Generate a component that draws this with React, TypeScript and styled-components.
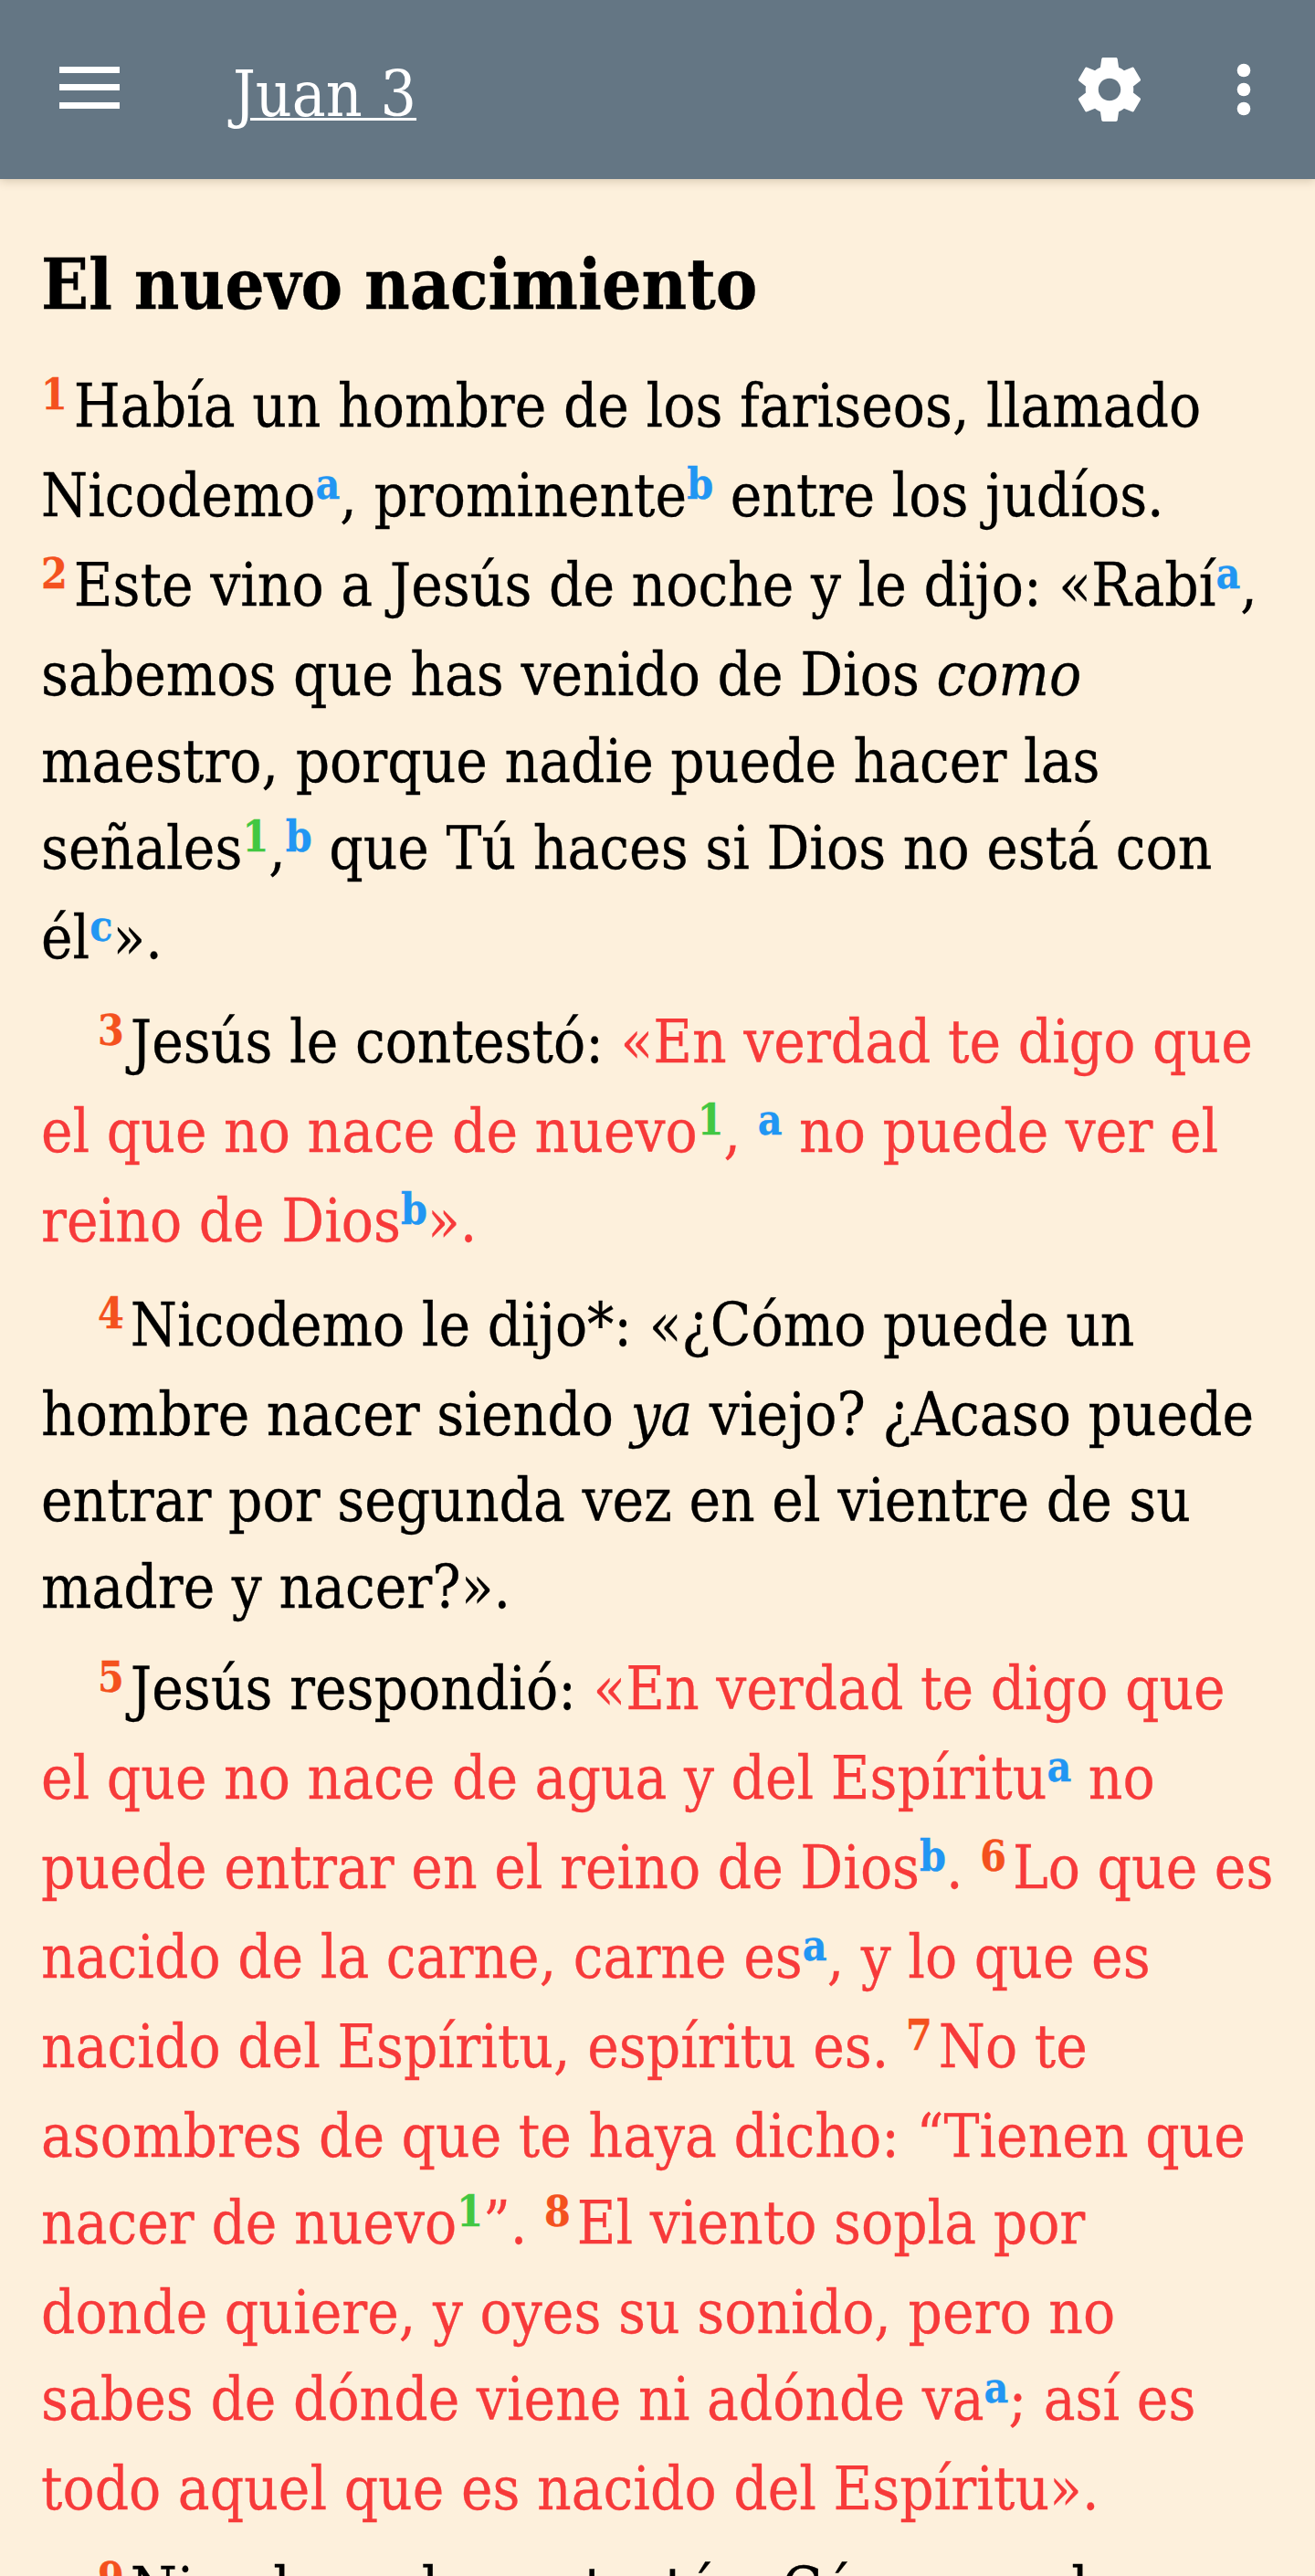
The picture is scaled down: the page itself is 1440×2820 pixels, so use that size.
import React from "react";
import styled, { createGlobalStyle } from "styled-components";

const GlobalStyle = createGlobalStyle`
  html, body {
    margin: 0;
    padding: 0;
    background: #fdf0dc;
  }
`;

const Page = styled.div`
  width: 1440px;
  height: 2820px;
  overflow: hidden;
  background: #fdf0dc;
  font-family: "DejaVu Serif Condensed", "DejaVu Serif", "Liberation Serif", serif;
`;

const TopBar = styled.header`
  display: flex;
  align-items: center;
  height: 196px;
  padding: 0 70px 0 65px;
  box-sizing: border-box;
  background: #647684;
  box-shadow: 0 2px 10px rgba(90, 70, 40, 0.25);
`;

const IconButton = styled.button<{ $lift?: number }>`
  display: flex;
  padding: 0;
  margin-bottom: ${(props) => props.$lift ?? 0}px;
  border: none;
  background: none;
  color: #fff;
`;

const ChapterTitle = styled.a`
  flex: 1;
  margin-left: 124px;
  padding-top: 10px;
  font-size: 69px;
  color: #fff;
  text-decoration: underline;
  text-decoration-thickness: 3px;
`;

const Actions = styled.div`
  display: flex;
  align-items: center;
  gap: 97px;
`;

const Content = styled.main`
  padding: 68px 20px 0 45px;
  font-size: 65px;
  line-height: 94.8px;
  color: #000;
  -webkit-text-stroke: 0.3px currentColor;
`;

const Heading = styled.h1`
  margin: 0 0 38px;
  font-size: 76px;
  line-height: 96px;
  font-weight: 700;
`;

const Verse = styled.p<{ $indent?: boolean }>`
  margin: 0 0 16px;
  text-indent: ${(props) => (props.$indent ? "62px" : "0")};
  white-space: nowrap;
`;

const Red = styled.span`
  color: #f73a3a;
`;

// the bottom padding hangs under the baseline, so a line with a marker pushes the next one down
const Marker = styled.sup<{ $kind: "verse" | "note" | "cross" }>`
  display: inline-block;
  text-indent: 0;
  font-size: 46px;
  line-height: 46px;
  padding-bottom: 41px;
  vertical-align: 19px;
  font-weight: 700;
  margin-right: ${(props) => (props.$kind === "verse" ? "7px" : "0")};
  color: ${(props) =>
    props.$kind === "verse" ? "#f4511e" : props.$kind === "note" ? "#42c742" : "#2196f3"};
`;

const V = ({ n }: { n: number }) => <Marker $kind="verse">{n}</Marker>;
const N = ({ t }: { t: string }) => <Marker $kind="note">{t}</Marker>;
const C = ({ t }: { t: string }) => <Marker $kind="cross">{t}</Marker>;

export default function App() {
  return (
    <Page>
      <GlobalStyle />
      <TopBar>
        <IconButton aria-label="Menu" $lift={4}>
          <svg width="66" height="46" viewBox="0 0 66 46" fill="currentColor">
            <rect y="0" width="66" height="7" />
            <rect y="19" width="66" height="7" />
            <rect y="39" width="66" height="7" />
          </svg>
        </IconButton>
        <ChapterTitle>Juan 3</ChapterTitle>
        <Actions>
          <IconButton aria-label="Ajustes">
            <svg width="84" height="84" viewBox="0 0 24 24" fill="currentColor">
              <path d="M19.43 12.98c.04-.32.07-.64.07-.98s-.03-.66-.07-.98l2.11-1.65c.19-.15.24-.42.12-.64l-2-3.46c-.12-.22-.39-.3-.61-.22l-2.49 1c-.52-.4-1.08-.73-1.69-.98l-.38-2.65C14.46 2.18 14.25 2 14 2h-4c-.25 0-.46.18-.49.42l-.38 2.65c-.61.25-1.17.59-1.69.98l-2.49-1c-.23-.09-.49 0-.61.22l-2 3.46c-.13.22-.07.49.12.64l2.11 1.65c-.04.32-.07.65-.07.98s.03.66.07.98l-2.11 1.65c-.19.15-.24.42-.12.64l2 3.46c.12.22.39.3.61.22l2.49-1c.52.4 1.08.73 1.69.98l.38 2.65c.03.24.24.42.49.42h4c.25 0 .46-.18.49-.42l.38-2.65c.61-.25 1.17-.59 1.69-.98l2.49 1c.23.09.49 0 .61-.22l2-3.46c.12-.22.07-.49-.12-.64l-2.11-1.65zM12 15.5c-1.93 0-3.5-1.57-3.5-3.5s1.57-3.5 3.5-3.5 3.5 1.57 3.5 3.5-1.57 3.5-3.5 3.5z" />
            </svg>
          </IconButton>
          <IconButton aria-label="Más">
            <svg width="16" height="58" viewBox="0 0 16 58" fill="currentColor">
              <circle cx="8" cy="8" r="7.3" />
              <circle cx="8" cy="29" r="7.3" />
              <circle cx="8" cy="50" r="7.3" />
            </svg>
          </IconButton>
        </Actions>
      </TopBar>
      <Content>
        <Heading>El nuevo nacimiento</Heading>
        <Verse>
          <V n={1} />Había un hombre de los fariseos, llamado
          <br />
          Nicodemo<C t="a" />, prominente<C t="b" /> entre los judíos.
          <br />
          <V n={2} />Este vino a Jesús de noche y le dijo: «Rabí<C t="a" />,
          <br />
          sabemos que has venido de Dios <em>como</em>
          <br />
          maestro, porque nadie puede hacer las
          <br />
          señales<N t="1" />,<C t="b" /> que Tú haces si Dios no está con
          <br />
          él<C t="c" />».
        </Verse>
        <Verse $indent>
          <V n={3} />Jesús le contestó: <Red>«En verdad te digo que</Red>
          <br />
          <Red>
            el que no nace de nuevo<N t="1" />, <C t="a" /> no puede ver el
            <br />
            reino de Dios<C t="b" />».
          </Red>
        </Verse>
        <Verse $indent>
          <V n={4} />Nicodemo le dijo*: «¿Cómo puede un
          <br />
          hombre nacer siendo <em>ya</em> viejo? ¿Acaso puede
          <br />
          entrar por segunda vez en el vientre de su
          <br />
          madre y nacer?».
        </Verse>
        <Verse $indent>
          <V n={5} />Jesús respondió: <Red>«En verdad te digo que</Red>
          <br />
          <Red>
            el que no nace de agua y del Espíritu<C t="a" /> no
            <br />
            puede entrar en el reino de Dios<C t="b" />. <V n={6} />Lo que es
            <br />
            nacido de la carne, carne es<C t="a" />, y lo que es
            <br />
            nacido del Espíritu, espíritu es. <V n={7} />No te
            <br />
            asombres de que te haya dicho: “Tienen que
            <br />
            nacer de nuevo<N t="1" />”. <V n={8} />El viento sopla por
            <br />
            donde quiere, y oyes su sonido, pero no
            <br />
            sabes de dónde viene ni adónde va<C t="a" />; así es
            <br />
            todo aquel que es nacido del Espíritu».
          </Red>
        </Verse>
        <Verse $indent>
          <V n={9} />Nicodemo le contestó: ¿Cómo puede
        </Verse>
      </Content>
    </Page>
  );
}
